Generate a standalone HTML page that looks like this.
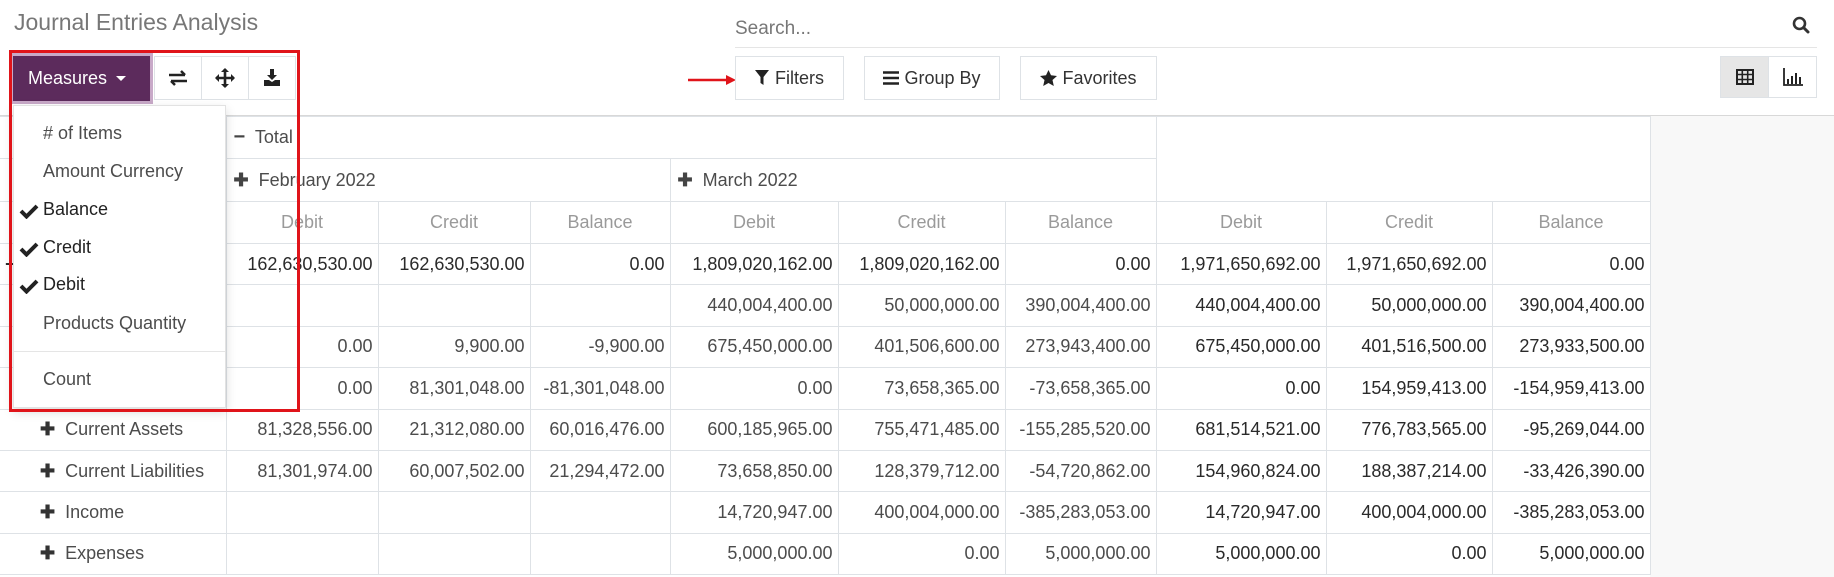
<!DOCTYPE html>
<html><head><meta charset="utf-8"><style>
*{box-sizing:border-box;margin:0;padding:0}
body{width:1834px;height:577px;overflow:hidden;background:#fff;font-family:"Liberation Sans",sans-serif;color:#4c4c4c;position:relative}
.abs{position:absolute}
.title{left:14px;top:9px;font-size:23px;color:#777}
.btn{position:absolute;top:56px;height:44px;border:1px solid #dee2e6;background:#fff;font-size:18px;color:#333;display:flex;align-items:center;justify-content:center}
.meas{left:13px;top:56px;width:137px;height:45px;background:#5c2b5c;color:#fff;font-size:18px;display:flex;align-items:center;padding-left:15px;box-shadow:0 0 0 3px #c8a9c8}
.search{left:735px;top:18px;font-size:19px;color:#777}
.sline{left:735px;top:47px;width:1082px;height:1px;background:#e5e5e5}
.cpline{left:0;top:115px;width:1834px;height:1px;background:#d8d8d8}
table{position:absolute;left:0;top:116px;border-collapse:collapse;font-size:18px}
td{border:1px solid #dee2e6;text-align:right;padding:0 5px;white-space:nowrap;height:41.4px}
td.h{text-align:left}
.mh td{color:#9a9a9a;text-align:center}
.t{color:#2a2a2a}
.rightbg{left:1650px;top:116px;width:184px;height:461px;background:#f8f8f8}
.dd{left:13px;top:105px;width:213px;height:303px;background:#fff;border:1px solid #e2e2e2;box-shadow:0 4px 10px rgba(0,0,0,.15);font-size:18px;color:#4c4c4c}
.dd div{position:absolute;left:29px}
.dd .ck{color:#222}
.dd svg{position:absolute;left:5px}
.red{left:9px;top:50px;width:291px;height:362px;border:3px solid #e0141a}
</style></head><body>
<div class="abs title">Journal Entries Analysis</div>
<div class="abs search">Search...</div>
<svg class="abs" style="left:1792px;top:16px" width="18" height="18" viewBox="0 0 18 18"><circle cx="7.5" cy="7.5" r="5.5" fill="none" stroke="#333" stroke-width="2.6"/><path d="M11.5 11.5L16 16" stroke="#333" stroke-width="3" stroke-linecap="round"/></svg>
<div class="abs sline"></div>
<div class="abs meas">Measures <span style="margin-left:9px;border-left:5px solid transparent;border-right:5px solid transparent;border-top:5px solid #fff"></span></div>
<div class="btn" style="left:154px;width:48px"><svg width="22" height="18" viewBox="0 0 22 18"><path d="M2 6H18M14 2L18 6M20 12H4M8 16L4 12" stroke="#222" stroke-width="2.5" fill="none"/></svg></div>
<div class="btn" style="left:201px;width:48px"><svg width="20" height="20" viewBox="0 0 20 20"><path d="M10 1V19M1 10H19" stroke="#222" stroke-width="2.6"/><path d="M10 0L6 4H14ZM10 20L6 16H14ZM0 10L4 6V14ZM20 10L16 6V14Z" fill="#222"/></svg></div>
<div class="btn" style="left:248px;width:48px"><svg width="18" height="18" viewBox="0 0 18 18"><path d="M7 0H11V6H14L9 11L4 6H7Z" fill="#222"/><path d="M1 11H6L9 13L12 11H17V17H1Z" fill="#222"/></svg></div>
<svg class="abs" style="left:688px;top:75px" width="48" height="10"><path d="M0 5H42" stroke="#e0141a" stroke-width="2.5"/><path d="M48 5L38 0V10Z" fill="#e0141a"/></svg>
<div class="btn" style="left:735px;width:109px"><svg width="14" height="16" viewBox="0 0 14 16" style="margin-right:6px"><path d="M0 0H14L8.5 7V15L5.5 13V7Z" fill="#222"/></svg>Filters</div>
<div class="btn" style="left:864px;width:136px"><svg width="16" height="14" viewBox="0 0 16 14" style="margin-right:5px"><path d="M0 1.5H16M0 7H16M0 12.5H16" stroke="#222" stroke-width="2.6"/></svg>Group By</div>
<div class="btn" style="left:1020px;width:137px"><svg width="17" height="16" viewBox="0 0 17 16" style="margin-right:5px"><path d="M8.5 0L11 5.3L17 6L12.5 10L13.8 16L8.5 13L3.2 16L4.5 10L0 6L6 5.3Z" fill="#222"/></svg>Favorites</div>
<div class="btn" style="left:1720px;top:56px;width:49px;height:42px;background:#e6e6e6"><svg width="18" height="16" viewBox="0 0 18 16"><rect x="1" y="1" width="16" height="14" fill="none" stroke="#222" stroke-width="2"/><path d="M1 5.5H17M1 10.5H17M6.3 1V15M11.7 1V15" stroke="#222" stroke-width="1.6"/></svg></div>
<div class="btn" style="left:1768px;top:56px;width:49px;height:42px"><svg width="20" height="18" viewBox="0 0 20 18"><path d="M1 0V17H20" stroke="#222" stroke-width="1.8" fill="none"/><path d="M4 11h2v5H4zM8 8h2v8H8zM12 5h2v11h-2zM16 9h2v7h-2z" fill="#222"/></svg></div>
<div class="abs cpline"></div>
<div class="abs rightbg"></div>
<table>
<colgroup><col style="width:226px"><col style="width:152px"><col style="width:152px"><col style="width:140px"><col style="width:168px"><col style="width:167px"><col style="width:151px"><col style="width:170px"><col style="width:166px"><col style="width:158px"></colgroup>
<tr style="height:42px"><td class="h" style="border-left:0"></td><td class="h" colspan="6" style="padding-left:7px"><b style="font-size:20px;color:#444">&minus;</b>&nbsp; Total</td><td colspan="3" rowspan="2"></td></tr>
<tr style="height:43px"><td class="h" style="border-left:0"></td><td class="h" colspan="3" style="padding-left:7px"><b style="color:#444">&#10010;</b>&nbsp; February 2022</td><td class="h" colspan="3" style="padding-left:7px"><b style="color:#444">&#10010;</b>&nbsp; March 2022</td></tr>
<tr class="mh" style="height:42px"><td style="border-left:0"></td><td>Debit</td><td>Credit</td><td>Balance</td><td>Debit</td><td>Credit</td><td>Balance</td><td>Debit</td><td>Credit</td><td>Balance</td></tr>
<tr class="t"><td class="h" style="border-left:0"><b>&minus;</b> Total</td><td>162,630,530.00</td><td>162,630,530.00</td><td>0.00</td><td>1,809,020,162.00</td><td>1,809,020,162.00</td><td>0.00</td><td>1,971,650,692.00</td><td>1,971,650,692.00</td><td>0.00</td></tr>
<tr><td class="h" style="border-left:0"></td><td></td><td></td><td></td><td>440,004,400.00</td><td>50,000,000.00</td><td>390,004,400.00</td><td class="t">440,004,400.00</td><td class="t">50,000,000.00</td><td class="t">390,004,400.00</td></tr>
<tr><td class="h" style="border-left:0"></td><td>0.00</td><td>9,900.00</td><td>-9,900.00</td><td>675,450,000.00</td><td>401,506,600.00</td><td>273,943,400.00</td><td class="t">675,450,000.00</td><td class="t">401,516,500.00</td><td class="t">273,933,500.00</td></tr>
<tr><td class="h" style="border-left:0"></td><td>0.00</td><td>81,301,048.00</td><td>-81,301,048.00</td><td>0.00</td><td>73,658,365.00</td><td>-73,658,365.00</td><td class="t">0.00</td><td class="t">154,959,413.00</td><td class="t">-154,959,413.00</td></tr>
<tr><td class="h" style="border-left:0;padding-left:40px"><b style="color:#333">&#10010;</b>&nbsp; Current Assets</td><td>81,328,556.00</td><td>21,312,080.00</td><td>60,016,476.00</td><td>600,185,965.00</td><td>755,471,485.00</td><td>-155,285,520.00</td><td class="t">681,514,521.00</td><td class="t">776,783,565.00</td><td class="t">-95,269,044.00</td></tr>
<tr><td class="h" style="border-left:0;padding-left:40px"><b style="color:#333">&#10010;</b>&nbsp; Current Liabilities</td><td>81,301,974.00</td><td>60,007,502.00</td><td>21,294,472.00</td><td>73,658,850.00</td><td>128,379,712.00</td><td>-54,720,862.00</td><td class="t">154,960,824.00</td><td class="t">188,387,214.00</td><td class="t">-33,426,390.00</td></tr>
<tr><td class="h" style="border-left:0;padding-left:40px"><b style="color:#333">&#10010;</b>&nbsp; Income</td><td></td><td></td><td></td><td>14,720,947.00</td><td>400,004,000.00</td><td>-385,283,053.00</td><td class="t">14,720,947.00</td><td class="t">400,004,000.00</td><td class="t">-385,283,053.00</td></tr>
<tr><td class="h" style="border-left:0;padding-left:40px"><b style="color:#333">&#10010;</b>&nbsp; Expenses</td><td></td><td></td><td></td><td>5,000,000.00</td><td>0.00</td><td>5,000,000.00</td><td class="t">5,000,000.00</td><td class="t">0.00</td><td class="t">5,000,000.00</td></tr>
</table>
<div class="abs dd">
<div style="top:17px">#&nbsp;of Items</div>
<div style="top:55px">Amount Currency</div>
<svg style="top:97px" width="20" height="16" viewBox="0 0 20 16"><path d="M2 8L7.5 13.5L18 3" stroke="#222" stroke-width="4" fill="none"/></svg>
<div class="ck" style="top:93px">Balance</div>
<svg style="top:135px" width="20" height="16" viewBox="0 0 20 16"><path d="M2 8L7.5 13.5L18 3" stroke="#222" stroke-width="4" fill="none"/></svg>
<div class="ck" style="top:131px">Credit</div>
<svg style="top:172px" width="20" height="16" viewBox="0 0 20 16"><path d="M2 8L7.5 13.5L18 3" stroke="#222" stroke-width="4" fill="none"/></svg>
<div class="ck" style="top:168px">Debit</div>
<div style="top:207px">Products Quantity</div>
<div style="top:245px;left:0;width:211px;height:1px;background:#e5e5e5"></div>
<div style="top:263px">Count</div>
</div>
<div class="abs red"></div>
</body></html>
